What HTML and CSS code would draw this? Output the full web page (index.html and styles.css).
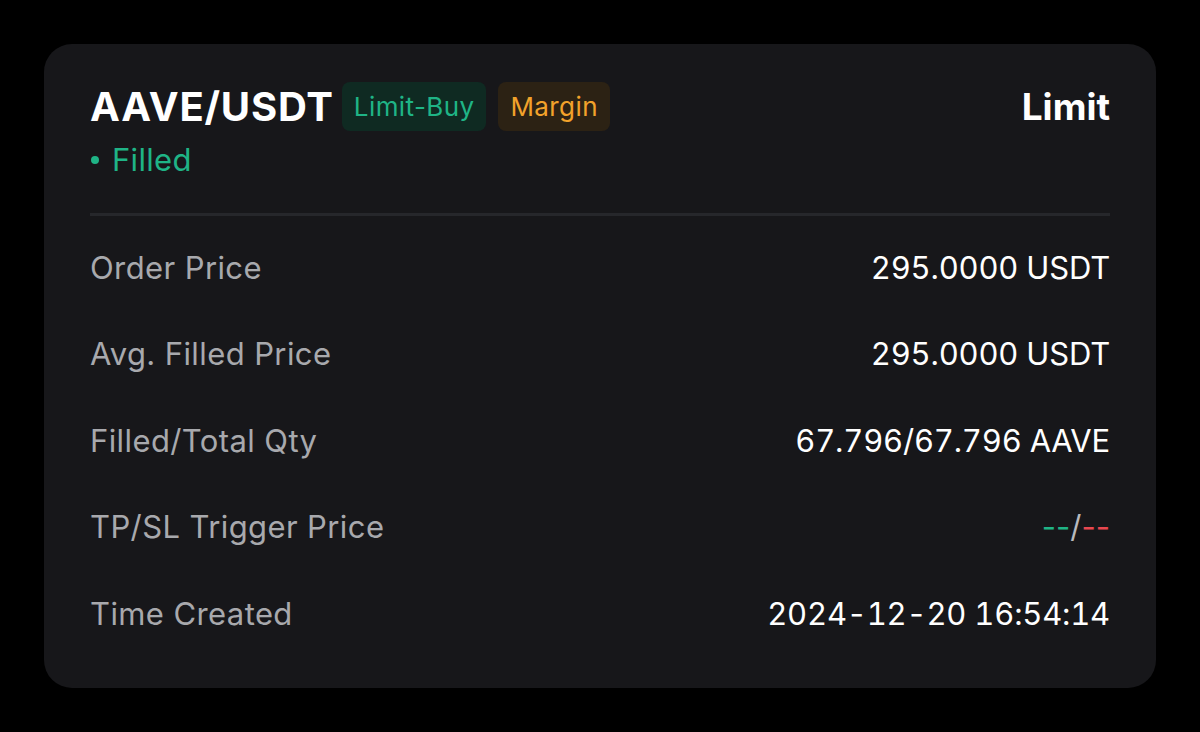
FILE: index.html
```html
<!DOCTYPE html>
<html>
<head>
<meta charset="utf-8">
<link rel="stylesheet" href="styles.css">
</head>
<body>
<div class="card">
  <div class="head">
    <div class="head-left">
      <div class="title-row">
        <span class="pair">AAVE/USDT</span>
        <span class="badge badge-buy">Limit-Buy</span>
        <span class="badge badge-margin">Margin</span>
      </div>
      <div class="status"><span class="dot"></span>Filled</div>
    </div>
    <div class="type">Limit</div>
  </div>
  <div class="divider"></div>
  <div class="rows">
    <div class="row"><span class="label">Order Price</span><span class="value">295.0000 USDT</span></div>
    <div class="row"><span class="label">Avg. Filled Price</span><span class="value">295.0000 USDT</span></div>
    <div class="row"><span class="label">Filled/Total Qty</span><span class="value">67.796/67.796 AAVE</span></div>
    <div class="row"><span class="label">TP/SL Trigger Price</span><span class="value value-dash"><span class="tp">--</span><span class="slash">/</span><span class="sl">--</span></span></div>
    <div class="row"><span class="label">Time Created</span><span class="value">2024-12-20 16:54:14</span></div>
  </div>
</div>
</body>
</html>
```
FILE: styles.css
```css
html, body {
  margin: 0;
  padding: 0;
  background: #000;
}
body {
  width: 1200px;
  height: 732px;
  padding: 44px;
  box-sizing: border-box;
  font-family: Inter, "Noto Sans", sans-serif;
}
.card {
  height: 644px;
  box-sizing: border-box;
  background: #17171a;
  border-radius: 28px;
  padding: 38px 46px 0 46px;
}
.head {
  display: flex;
  justify-content: space-between;
  align-items: flex-start;
}
.title-row {
  display: flex;
  align-items: center;
  height: 49px;
}
.pair {
  color: #fff;
  font-weight: 700;
  font-size: 40px;
  letter-spacing: 0.8px;
  margin-right: 8px;
}
.badge {
  height: 49px;
  box-sizing: border-box;
  display: inline-flex;
  align-items: center;
  padding: 0 12px;
  border-radius: 8px;
  font-size: 26px;
  letter-spacing: 0.4px;
  margin-right: 12px;
}
.badge-buy {
  color: #1fb486;
  background: #0f2a22;
}
.badge-margin {
  color: #f2a22b;
  background: #2c2214;
}
.status {
  color: #1fb486;
  font-size: 31px;
  letter-spacing: 0.3px;
  height: 42px;
  line-height: 42px;
  margin-top: 8px;
  display: flex;
  align-items: center;
}
.dot {
  width: 8px;
  height: 8px;
  border-radius: 50%;
  background: #1fb486;
  margin: 0 13px 0 1px;
}
.type {
  color: #fff;
  font-weight: 700;
  font-size: 37px;
  line-height: 49px;
}
.divider {
  height: 3px;
  background: #26272b;
  margin-top: 32px;
  margin-bottom: 8px;
}
.row {
  height: 86.5px;
  display: flex;
  justify-content: space-between;
  align-items: center;
  font-size: 31px;
}
.label {
  color: #a8a9ad;
  letter-spacing: 0.4px;
}
.value {
  color: #fff;
  font-feature-settings: "tnum" 1;
  letter-spacing: -0.2px;
}
.value-dash {
  font-feature-settings: normal;
  letter-spacing: 0;
}
.tp {
  color: #1fb486;
}
.sl {
  color: #e8474f;
}
.slash {
  color: #b8b9bd;
}
```
